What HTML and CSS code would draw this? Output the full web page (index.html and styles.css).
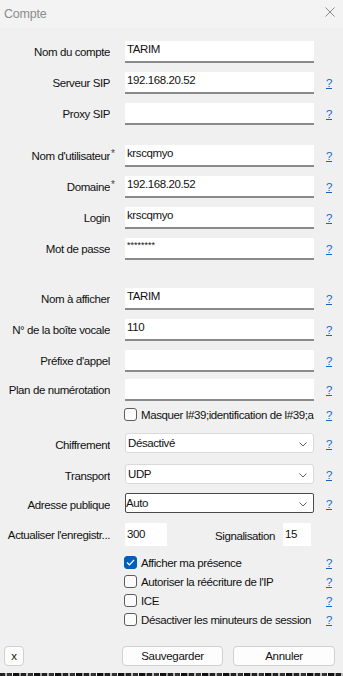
FILE: index.html
```html
<!DOCTYPE html>
<html lang="fr">
<head>
<meta charset="utf-8">
<title>Compte</title>
<link rel="stylesheet" href="styles.css">
</head>
<body>
<div class="window">
  <div class="titlebar">
    <span class="title">Compte</span>
    <svg class="close" width="10" height="10" viewBox="0 0 10 10"><path d="M0.5 0.5L9.5 9.5M9.5 0.5L0.5 9.5" stroke="#8a8a8a" stroke-width="1" fill="none"/></svg>
  </div>
  <div class="form">
    <div class="row">
      <span class="lbl">Nom du compte</span><span class="req"></span>
      <div class="field">TARIM</div>
    </div>
    <div class="row mt9">
      <span class="lbl">Serveur SIP</span><span class="req"></span>
      <div class="field">192.168.20.52</div><a class="help">?</a>
    </div>
    <div class="row mt9">
      <span class="lbl">Proxy SIP</span><span class="req"></span>
      <div class="field"></div><a class="help">?</a>
    </div>
    <div class="row mt20">
      <span class="lbl">Nom d'utilisateur</span><span class="req">*</span>
      <div class="field">krscqmyo</div><a class="help">?</a>
    </div>
    <div class="row mt9">
      <span class="lbl">Domaine</span><span class="req">*</span>
      <div class="field">192.168.20.52</div><a class="help">?</a>
    </div>
    <div class="row mt9">
      <span class="lbl">Login</span><span class="req"></span>
      <div class="field">krscqmyo</div><a class="help">?</a>
    </div>
    <div class="row mt9">
      <span class="lbl">Mot de passe</span><span class="req"></span>
      <div class="field pwd">********</div><a class="help">?</a>
    </div>
    <div class="row mt28">
      <span class="lbl">Nom à afficher</span><span class="req"></span>
      <div class="field">TARIM</div><a class="help">?</a>
    </div>
    <div class="row mt9">
      <span class="lbl">N° de la boîte vocale</span><span class="req"></span>
      <div class="field">110</div><a class="help">?</a>
    </div>
    <div class="row mt9">
      <span class="lbl">Préfixe d'appel</span><span class="req"></span>
      <div class="field"></div><a class="help">?</a>
    </div>
    <div class="row mt7">
      <span class="lbl">Plan de numérotation</span><span class="req"></span>
      <div class="field"></div><a class="help">?</a>
    </div>
    <div class="check-row mt7">
      <span class="box"></span>
      <span class="check-text clip">Masquer l#39;identification de l#39;a</span>
      <a class="help">?</a>
    </div>
    <div class="row sel-row mt12">
      <span class="lbl">Chiffrement</span><span class="req"></span>
      <div class="select"><span>Désactivé</span><svg class="chev" width="8" height="5" viewBox="0 0 8 5"><path d="M0.5 0.5L4 4L7.5 0.5" stroke="#5f5f5f" fill="none"/></svg></div><a class="help">?</a>
    </div>
    <div class="row sel-row mt11">
      <span class="lbl">Transport</span><span class="req"></span>
      <div class="select"><span>UDP</span><svg class="chev" width="8" height="5" viewBox="0 0 8 5"><path d="M0.5 0.5L4 4L7.5 0.5" stroke="#5f5f5f" fill="none"/></svg></div><a class="help">?</a>
    </div>
    <div class="row sel-row mt9">
      <span class="lbl">Adresse publique</span><span class="req"></span>
      <div class="select focus"><span>Auto</span><svg class="chev" width="8" height="5" viewBox="0 0 8 5"><path d="M0.5 0.5L4 4L7.5 0.5" stroke="#5f5f5f" fill="none"/></svg></div><a class="help">?</a>
    </div>
    <div class="row small-row mt10">
      <span class="lbl">Actualiser l'enregistr...</span><span class="req"></span>
      <div class="field short">300</div>
      <span class="lbl2">Signalisation</span>
      <div class="field tiny">15</div>
    </div>
    <div class="check-row mt10">
      <span class="box checked"><svg width="9" height="7" viewBox="0 0 9 7"><path d="M1 3.5L3.4 5.8L8 1" stroke="#fff" stroke-width="1.2" fill="none"/></svg></span>
      <span class="check-text">Afficher ma présence</span>
      <a class="help">?</a>
    </div>
    <div class="check-row mt6">
      <span class="box"></span>
      <span class="check-text">Autoriser la réécriture de l'IP</span>
      <a class="help">?</a>
    </div>
    <div class="check-row mt6">
      <span class="box"></span>
      <span class="check-text">ICE</span>
      <a class="help">?</a>
    </div>
    <div class="check-row mt6">
      <span class="box"></span>
      <span class="check-text">Désactiver les minuteurs de session</span>
      <a class="help">?</a>
    </div>
    <div class="footer">
      <button class="btn btn-x">x</button>
      <button class="btn btn-save">Sauvegarder</button>
      <button class="btn btn-cancel">Annuler</button>
    </div>
  </div>
  <div class="strip"></div>
</div>
</body>
</html>
```
FILE: styles.css
```css
* { box-sizing: border-box; }
html, body { margin: 0; padding: 0; }
body {
  width: 343px;
  height: 676px;
  overflow: hidden;
  font-family: "Liberation Sans", Arial, sans-serif;
  font-size: 11.5px;
  letter-spacing: -0.4px;
  line-height: 14px;
  color: #111;
  background: #f0f0f0;
}
.window {
  width: 343px;
  height: 676px;
  display: flex;
  flex-direction: column;
}
.titlebar {
  height: 28px;
  flex: none;
  background: #f3f3f3;
  display: flex;
  align-items: center;
  justify-content: space-between;
  padding: 0 4px 0 4px;
}
.title {
  color: #8c8c8c;
  font-size: 12.5px;
  letter-spacing: -0.2px;
}
.close { margin-right: 4px; margin-top: -4px; }
.form {
  padding-top: 13px;
  display: flex;
  flex-direction: column;
}
.row {
  display: flex;
  align-items: flex-start;
  height: 22px;
}
.mt6 { margin-top: 6px; }
.mt7 { margin-top: 7px; }
.mt9 { margin-top: 9px; }
.mt10 { margin-top: 10px; }
.mt11 { margin-top: 11px; }
.mt12 { margin-top: 12px; }
.mt20 { margin-top: 20px; }
.mt28 { margin-top: 28px; }
.lbl {
  width: 110px;
  flex: none;
  text-align: right;
  white-space: nowrap;
  overflow: hidden;
  padding-top: 4px;
}
.req {
  width: 15px;
  flex: none;
  padding-left: 1px;
  padding-top: 2px;
  font-size: 10px;
  color: #444;
}
.field {
  width: 189px;
  height: 22px;
  flex: none;
  background: #fff;
  border-bottom: 2px solid #8a8a8a;
  padding: 1px 2px 0;
  white-space: nowrap;
  overflow: hidden;
}
.field.pwd { font-size: 9px; padding-top: 0; letter-spacing: 0; }
.help {
  margin-left: 12px;
  padding-top: 4px;
  color: #1565c8;
  text-decoration: underline;
  cursor: pointer;
}
.check-row {
  display: flex;
  align-items: center;
  height: 13px;
  padding-left: 124px;
}
.box {
  width: 13px;
  height: 13px;
  flex: none;
  border: 1px solid #5c5c5c;
  border-radius: 3px;
  background: #fbfbfb;
  display: flex;
  align-items: center;
  justify-content: center;
}
.box.checked {
  background: #005fb8;
  border-color: #005fb8;
}
.check-text {
  margin-left: 4px;
  white-space: nowrap;
  width: 173px;
  flex: none;
}
.check-text.clip { overflow: hidden; }
.check-row .help { padding-top: 0; margin-left: 12px; }
.sel-row { height: 20px; }
.sel-row .lbl { padding-top: 5px; }
.sel-row .help { padding-top: 4px; }
.select {
  width: 189px;
  height: 20px;
  flex: none;
  background: #fff;
  border: 1px solid #d9d9d9;
  border-radius: 3px;
  display: flex;
  align-items: flex-start;
  justify-content: space-between;
  padding: 2px 6px 0 2px;
}
.select.focus { border-color: #4a4a4a; border-radius: 2px; padding-left: 0; }
.chev { margin-top: 6px; }
.small-row { height: 23px; }
.small-row .lbl { padding-top: 5px; }
.field.short { width: 42px; height: 23px; padding-top: 4px; border-bottom: none; }
.lbl2 { margin-left: 48px; padding-top: 6px; width: 58px; white-space: nowrap; }
.field.tiny { width: 28px; height: 23px; padding-top: 4px; margin-left: 10px; border-bottom: none; }
.footer {
  display: flex;
  align-items: center;
  margin-top: 19px;
  padding-left: 4px;
}
.btn {
  height: 20px;
  padding: 0;
  font-family: "Liberation Sans", Arial, sans-serif;
  font-size: 11.5px;
  letter-spacing: -0.3px;
  color: #111;
  background: #fdfdfd;
  border: 1px solid #d0d0d0;
  border-radius: 4px;
}
.btn-x { width: 20px; margin-top: 1px; }
.btn-save { width: 101px; margin-left: 98px; }
.btn-cancel { width: 102px; margin-left: 10px; }
.strip {
  margin-top: auto;
  height: 3px;
  background: repeating-linear-gradient(90deg, #222 0 5px, #bbb 5px 7px, #333 7px 12px, #eee 12px 13px, #111 13px 19px, #999 19px 21px);
}
```
